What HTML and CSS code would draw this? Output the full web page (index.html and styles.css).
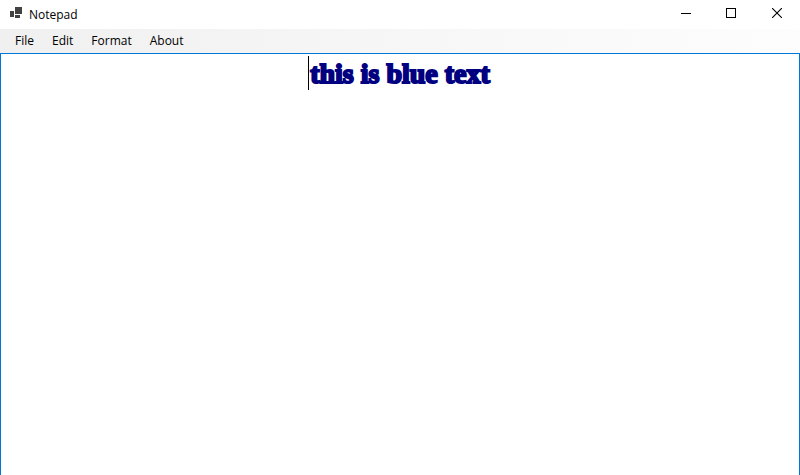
FILE: index.html
```html
<!DOCTYPE html>
<html lang="en">
<head>
<meta charset="utf-8">
<meta name="viewport" content="width=device-width, initial-scale=1">
<title>Notepad</title>
<link rel="stylesheet" href="styles.css">
</head>
<body>
<div class="window">
  <header class="titlebar">
    <svg class="app-icon" width="12" height="12" viewBox="0 0 12 12" shape-rendering="crispEdges" fill="#424242" aria-hidden="true">
      <rect x="0" y="4" width="4" height="6"/>
      <rect x="5" y="0" width="7" height="7"/>
      <rect x="5" y="8" width="5" height="3"/>
    </svg>
    <h1 class="title">Notepad</h1>
    <div class="controls">
      <button class="control" type="button" aria-label="Minimize">
        <svg width="12" height="10" viewBox="0 0 12 10" shape-rendering="crispEdges"><rect x="2" y="5" width="10" height="1"/></svg>
      </button>
      <button class="control" type="button" aria-label="Maximize">
        <svg width="10" height="10" viewBox="0 0 10 10" shape-rendering="crispEdges"><rect x=".5" y=".5" width="9" height="9" fill="none" stroke="#000"/></svg>
      </button>
      <button class="control" type="button" aria-label="Close">
        <svg width="10" height="10" viewBox="0 0 10 10"><path d="M0 0L10 10M10 0L0 10" fill="none" stroke="#000" stroke-width="1.1"/></svg>
      </button>
    </div>
  </header>
  <nav class="menubar" aria-label="Main menu">
    <button class="menu-item" type="button">File</button>
    <button class="menu-item" type="button">Edit</button>
    <button class="menu-item" type="button">Format</button>
    <button class="menu-item" type="button">About</button>
  </nav>
  <main class="editor">
    <textarea class="document" aria-label="Document" spellcheck="false">this is blue text</textarea>
    <span class="caret"></span>
  </main>
</div>
</body>
</html>
```
FILE: styles.css
```css
* {
  box-sizing: border-box;
}

body {
  margin: 0;
  background: #fff;
  color: #000;
  font: 12px/16px "Open Sans", "Noto Sans", sans-serif;
}

button {
  border: 0;
  background: transparent;
  color: inherit;
  font: inherit;
}

.window {
  display: flex;
  flex-direction: column;
  height: 100vh;
}

.titlebar {
  display: flex;
  align-items: center;
  height: 29px;
  padding-left: 10px;
}

.app-icon {
  margin: 0 7px 3px 0;
}

.title {
  margin: 0;
  font-size: 12px;
  font-weight: 400;
}

.controls {
  display: flex;
  align-self: stretch;
  margin-left: auto;
  padding-bottom: 3px;
}

.control {
  display: flex;
  align-items: center;
  justify-content: center;
  width: 46px;
  padding: 0;
}

.menubar {
  display: flex;
  align-items: center;
  height: 24px;
  padding-left: 6px;
  background: linear-gradient(to right, #f0f0f0, #fdfdfd);
}

.menu-item {
  padding: 0 9px;
}

.editor {
  position: relative;
  display: flex;
  flex: 1;
  border: 1px solid #0078d7;
  border-bottom: 0;
}

.document {
  flex: 1;
  margin: 0;
  padding: 1px 0;
  border: 0;
  outline: 0;
  resize: none;
  background: transparent;
  color: #000080;
  font: bold 28px/38px "Liberation Serif", serif;
  text-align: center;
  -webkit-text-stroke: 2px #000080;
}

.caret {
  position: absolute;
  top: 2px;
  left: calc(50% - 92px);
  width: 1px;
  height: 34px;
  background: #000;
}
```
